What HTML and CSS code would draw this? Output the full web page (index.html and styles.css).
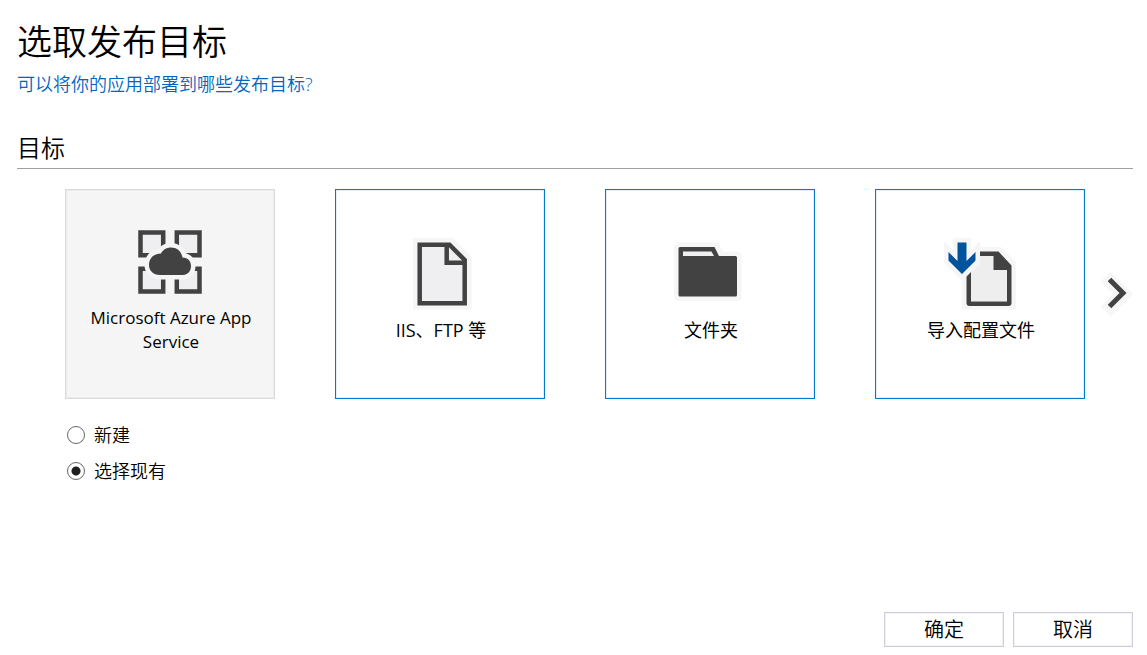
FILE: index.html
```html
<!DOCTYPE html>
<html lang="zh-CN">
<head>
<meta charset="utf-8">
<meta name="viewport" content="width=device-width, initial-scale=1">
<title>选取发布目标</title>
<link rel="stylesheet" href="styles.css">
</head>
<body>
<form class="dialog">
  <header class="header">
    <h1 class="title">选取发布目标</h1>
    <a class="help-link" href="#targets">可以将你的应用部署到哪些发布目标?</a>
  </header>
  <h2 class="section-title" id="targets">目标</h2>
  <div class="carousel">
    <div class="cards">
      <button type="button" class="card card-selected" aria-pressed="true">
        <svg class="icon" viewBox="0 0 72 72" aria-hidden="true">
          <g fill="#efeff2" stroke="#424242" stroke-width="4.5">
            <path d="M6.5 6.5H29.2V29.2H6.5ZM42.8 6.5H65.5V29.2H42.8ZM6.5 42.8H29.2V65.5H6.5ZM42.8 42.8H65.5V65.5H42.8Z"/>
          </g>
          <path d="M26 49C19 49 15 44.500 15 39C15 32 20 27.500 27 27.500C29 23.500 33 21.500 37 21.500C43 21.500 47.500 25.500 48.500 31.500C54 31.500 57 35.500 57 40C57 45.500 53.500 49 49 49Z" fill="#424242" stroke="#f5f5f5" stroke-width="9" paint-order="stroke" stroke-linejoin="round"/>
        </svg>
        <span class="card-label card-label-latin">Microsoft Azure App Service</span>
      </button>
      <button type="button" class="card" aria-pressed="false">
        <svg class="icon" viewBox="0 0 72 72" aria-hidden="true">
          <path d="M9 0H49.500L67.500 18.500V71.500H9Z" fill="#f6f6f6"/>
          <path d="M15.700 6.700H45.500L60.700 22V65.300H15.700Z" fill="#efeff2" stroke="#424242" stroke-width="4.500"/>
          <path d="M42.700 6V24.800H62" fill="none" stroke="#424242" stroke-width="4.500"/>
        </svg>
        <span class="card-label">IIS、FTP 等</span>
      </button>
      <button type="button" class="card" aria-pressed="false">
        <svg class="icon" viewBox="0 0 72 72" aria-hidden="true">
          <path d="M3 4.500H44L49 13.500H64.500L67.500 16.500V60L64.500 63H3L0 60V7.500Z" fill="#f6f6f6"/>
          <path d="M6 9H40.500L45 18H61.500Q63 18 63 19.500V57Q63 58.500 61.500 58.500H6Q4.500 58.500 4.500 57V10.500Q4.500 9 6 9Z" fill="#424242"/>
          <path d="M9 13.500H37.500L40 18H9Z" fill="#efeff2"/>
        </svg>
        <span class="card-label">文件夹</span>
      </button>
      <button type="button" class="card" aria-pressed="false">
        <svg class="icon" viewBox="0 0 72 72" aria-hidden="true">
          <path d="M9 0H27V12L36 3V9H57L72 24V71.500H18V42.500L0 25V3L9 12Z" fill="#f6f6f6"/>
          <path d="M27 34.500L36 27V18H51V30H63V63H27Z" fill="#eeeeee"/>
          <path d="M36 13.500H54.500L67.500 27.500V65Q67.500 68 64.500 68H25.500Q22.500 68 22.500 65V38.500L27 34V63.500H63V32H49.500V18H36Z" fill="#424242"/>
          <path d="M13.500 4.500H22.500V23L31.500 14V22.500L18 36L4.500 22.500V14L13.500 23Z" fill="#00539c"/>
        </svg>
        <span class="card-label">导入配置文件</span>
      </button>
    </div>
    <button type="button" class="next" aria-label="下一页">
      <svg class="chevron" viewBox="0 0 32 44" aria-hidden="true">
        <path d="M10 0L32 22L10 44L0 35L12 22L0 9Z" fill="#f6f6f6"/>
        <path d="M8.500 7.500L22 21L8.500 34.500" fill="none" stroke="#424242" stroke-width="5"/>
      </svg>
    </button>
  </div>
  <div class="options" role="radiogroup" aria-labelledby="targets">
    <label class="option"><input class="radio" type="radio" name="mode" value="new">新建</label>
    <label class="option"><input class="radio" type="radio" name="mode" value="existing" checked>选择现有</label>
  </div>
  <footer class="footer">
    <button type="submit" class="action">确定</button>
    <button type="button" class="action">取消</button>
  </footer>
</form>
</body>
</html>
```
FILE: styles.css
```css
* {
  box-sizing: border-box;
}

body {
  margin: 0;
  background: #fff;
  color: #000;
  font-family: "Open Sans", "Noto Sans CJK SC", sans-serif;
  font-size: 18px;
  font-weight: 350;
}

button {
  font: inherit;
  color: inherit;
}

.dialog {
  display: flex;
  flex-direction: column;
  min-height: 100vh;
  padding: 16px 14px 8px 17px;
}

.header {
  display: flex;
  flex-direction: column;
  align-items: flex-start;
}

.title {
  margin: 0;
  font-size: 35px;
  font-weight: 350;
  line-height: 52px;
}

.help-link {
  color: #0066bf;
  line-height: 32px;
  text-decoration: none;
}

.section-title {
  margin: 28px 0 0;
  border-bottom: 1px solid #a0a0a0;
  font-size: 24px;
  font-weight: 350;
  line-height: 40px;
}

.carousel {
  display: flex;
  align-items: center;
  gap: 16px;
  margin-top: 20px;
  padding-left: 48px;
}

.cards {
  display: grid;
  flex: 1;
  grid-template-columns: repeat(4, 1fr);
  gap: 60px;
}

.card {
  display: flex;
  flex-direction: column;
  align-items: center;
  justify-content: center;
  gap: 8px;
  aspect-ratio: 1;
  padding: 0 16px 8px;
  border: 1px solid #007acc;
  background: #fff;
  box-shadow: inset 0 0 0 1px #e0effa;
}

.card-selected {
  border-color: #d9d9d9;
  background: #f5f5f5;
  box-shadow: inset 0 0 0 1px #ececec;
}

.icon {
  width: 72px;
  height: 72px;
}

.card-label {
  padding-left: 2px;
  font-weight: 400;
  line-height: 24px;
  text-align: center;
}

.card-label-latin {
  font-size: 17px;
}

.next {
  display: flex;
  padding: 0;
  border: 0;
  background: none;
}

.chevron {
  width: 32px;
  height: 44px;
}

.options {
  display: flex;
  flex-direction: column;
  align-items: flex-start;
  margin-top: 18px;
  padding-left: 50px;
}

.option {
  display: flex;
  align-items: center;
  gap: 9px;
  line-height: 36px;
}

.radio {
  width: 18px;
  height: 18px;
  margin: 0;
  appearance: none;
  border: 1px solid #666;
  border-radius: 50%;
  background: #fff;
}

.radio:checked {
  background: radial-gradient(circle, #1e1e1e 4px, #fff 5px);
}

.footer {
  display: flex;
  justify-content: flex-end;
  gap: 9px;
  margin-top: auto;
}

.action {
  width: 120px;
  padding: 0;
  border: 1px solid #cccedb;
  background: #fff;
  box-shadow: inset 0 0 0 1px #f3f3f7;
  font-size: 20px;
  line-height: 33px;
}
```
